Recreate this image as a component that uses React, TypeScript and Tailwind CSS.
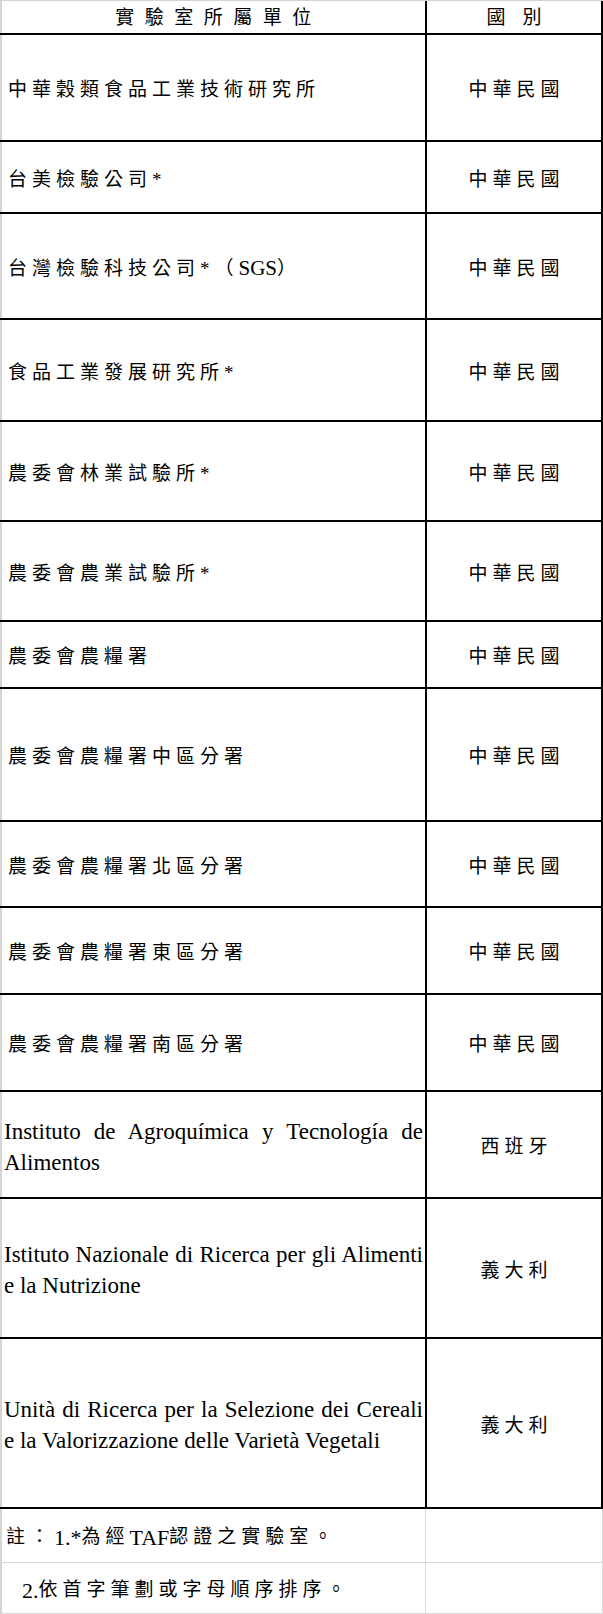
import React from 'react';

type Row = { name: React.ReactNode; country: string; h: string; latin?: boolean };

const cjk = "font-['Liberation_Serif','Noto_Sans_CJK_TC',serif]";

const rows: Row[] = [
  { name: '中華穀類食品工業技術研究所', country: '中華民國', h: 'h-[107px]' },
  { name: '台美檢驗公司*', country: '中華民國', h: 'h-[72px]' },
  {
    name: (
      <>
        台灣檢驗科技公司*（<span className="tracking-normal text-[21px]">SGS</span>）
      </>
    ),
    country: '中華民國',
    h: 'h-[106px]',
  },
  { name: '食品工業發展研究所*', country: '中華民國', h: 'h-[102px]' },
  { name: '農委會林業試驗所*', country: '中華民國', h: 'h-[100px]' },
  { name: '農委會農業試驗所*', country: '中華民國', h: 'h-[100px]' },
  { name: '農委會農糧署', country: '中華民國', h: 'h-[67px]' },
  { name: '農委會農糧署中區分署', country: '中華民國', h: 'h-[133px]' },
  { name: '農委會農糧署北區分署', country: '中華民國', h: 'h-[86px]' },
  { name: '農委會農糧署東區分署', country: '中華民國', h: 'h-[87px]' },
  { name: '農委會農糧署南區分署', country: '中華民國', h: 'h-[97px]' },
  { name: 'Instituto de Agroquímica y Tecnología de Alimentos', country: '西班牙', h: 'h-[107px]', latin: true },
  { name: 'Istituto Nazionale di Ricerca per gli Alimenti e la Nutrizione', country: '義大利', h: 'h-[140px]', latin: true },
  {
    name: 'Unità di Ricerca per la Selezione dei Cereali e la Valorizzazione delle Varietà Vegetali',
    country: '義大利',
    h: 'h-[170px]',
    latin: true,
  },
];

const App: React.FC = () => {
  return (
    <div className={`w-[603px] bg-white text-black ${cjk}`}>
      {/* header */}
      <div className="flex h-[35px] border-t border-b-2 border-t-[#d4d4d4] border-b-black">
        <div className="w-[425px] border-l-2 border-[#d4d4d4] flex items-center justify-center pt-[3px] pl-[10px] text-[19px] tracking-[10.5px]">
          實驗室所屬單位
        </div>
        <div className="flex-1 border-l-2 border-r-2 border-black flex items-center justify-center pt-[3px] pl-[17px] text-[19px] tracking-[17px]">
          國別
        </div>
      </div>

      {rows.map((r, i) => (
        <div key={i} className={`flex ${r.h} border-b-2 border-black`}>
          <div className="w-[425px] border-l-2 border-[#d4d4d4] flex items-center">
            {r.latin ? (
              <div className="w-full pl-[2px] pr-[2px] pt-[4px] font-['Liberation_Serif',serif] text-[23px] leading-[31px] text-justify">
                {r.name}
              </div>
            ) : (
              <div className="pl-[6px] pt-[6px] text-[19px] tracking-[5px] whitespace-nowrap">{r.name}</div>
            )}
          </div>
          <div className="flex-1 border-l-2 border-r-2 border-black flex items-center justify-center pt-[6px] pl-[5px] text-[19px] tracking-[5px]">
            {r.country}
          </div>
        </div>
      ))}

      {/* notes */}
      <div className="flex h-[54px] border-b border-[#d9d9d9]">
        <div className="w-[426px] border-l-2 border-r border-[#d9d9d9] border-l-[#d4d4d4] flex items-center pl-[4px] pt-[4px] text-[19px] tracking-[5px] whitespace-nowrap">
          註：<span className="tracking-normal text-[22px]">1.*</span>為經<span className="tracking-normal text-[22px]">TAF</span>認證之實驗室。
        </div>
        <div className="flex-1 border-r border-[#d9d9d9]" />
      </div>
      <div className="flex h-[51px] border-b border-[#d9d9d9]">
        <div className="w-[426px] border-l-2 border-r border-[#d9d9d9] border-l-[#d4d4d4] flex items-center pl-[20px] pt-[4px] text-[19px] tracking-[5px] whitespace-nowrap">
          <span className="tracking-normal text-[22px]">2.</span>依首字筆劃或字母順序排序。
        </div>
        <div className="flex-1 border-r border-[#d9d9d9]" />
      </div>
    </div>
  );
};

export default App;
